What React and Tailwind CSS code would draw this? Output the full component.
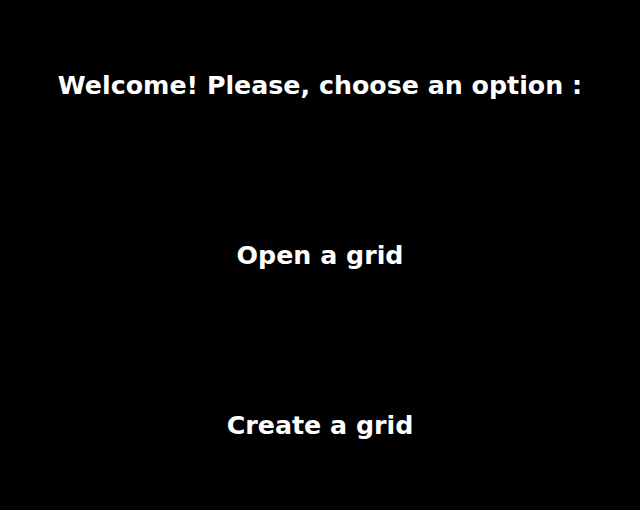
export default function App() {
  const items = ["Welcome! Please, choose an option :", "Open a grid", "Create a grid"];
  return (
    <div className="grid h-[510px] w-[640px] grid-rows-3 bg-black font-['DejaVu_Sans',sans-serif] text-[25.3px] font-bold text-white">
      {items.map((t) => (
        <div key={t} className="flex items-center justify-center pt-[2px]">
          {t}
        </div>
      ))}
    </div>
  );
}
